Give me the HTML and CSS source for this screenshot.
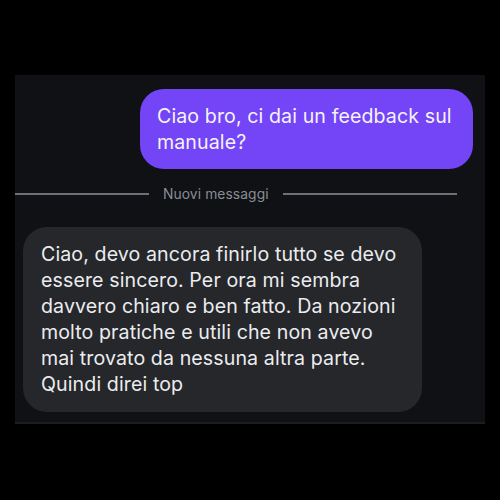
FILE: index.html
```html
<!DOCTYPE html>
<html lang="it">
<head>
  <meta charset="UTF-8">
  <title>Chat</title>
  <link rel="stylesheet" href="styles.css">
</head>
<body>
  <main class="chat">
    <div class="row row-out">
      <div class="bubble bubble-out">Ciao bro, ci dai un feedback sul manuale?</div>
    </div>
    <div class="divider">
      <span class="line line-left"></span>
      <span class="label">Nuovi messaggi</span>
      <span class="line line-right"></span>
    </div>
    <div class="row row-in">
      <div class="bubble bubble-in">Ciao, devo ancora finirlo tutto se devo essere sincero. Per ora mi sembra davvero chiaro e ben fatto. Da nozioni molto pratiche e utili che non avevo mai trovato da nessuna altra parte. Quindi direi top</div>
    </div>
  </main>
</body>
</html>
```

FILE: styles.css
```css
body { background: #000; margin: 0; font-family: Inter, "Noto Sans", sans-serif; }
.chat { background: #0f1115; margin: 75px 15px 0; height: 349px; border-bottom: 2px solid #1c1d21; box-sizing: border-box; padding-top: 14px; }
.row { display: flex; }
.row-out { justify-content: flex-end; padding-right: 12px; }
.row-in { padding-left: 8px; }
.bubble { font-size: 19.6px; line-height: 26px; letter-spacing: 0.1px; color: #f4f3f8; }
.bubble-out { background: #7444f7; border-radius: 24px; padding: 14px 17px; width: 333px; box-sizing: border-box; }
.bubble-in { background: #25272b; border-radius: 24px; padding: 14px 18px 15px; width: 399px; box-sizing: border-box; color: #ebecef; }
/* Divider */
.divider { display: flex; align-items: center; gap: 14px; height: 20px; margin: 15px 28px 23px 0; }
.line { flex: 1; height: 1.5px; background: #6e7077; }
.line-left { flex: 0 0 134px; }
.label { font-size: 13.8px; color: #8a8d94; letter-spacing: 0.1px; }
```
